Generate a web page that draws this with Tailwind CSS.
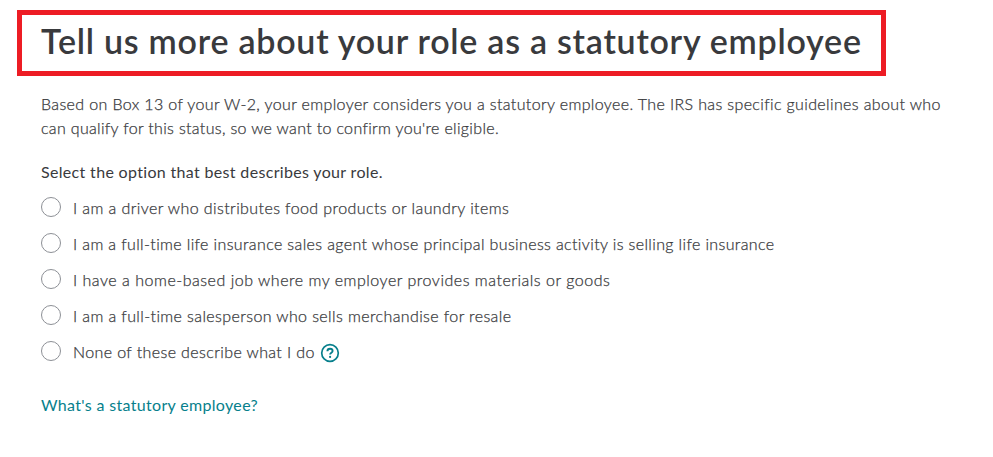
<!DOCTYPE html>
<html lang="en">
<head>
    <meta charset="UTF-8">
    <meta name="viewport" content="width=device-width, initial-scale=1.0">
    <title>Statutory Employee</title>
    <script src="https://cdn.jsdelivr.net/npm/@tailwindcss/browser@4"></script>
</head>
<body class="bg-white text-[#393a3d] font-['Lato','Noto_Sans',sans-serif] text-base leading-6 overflow-hidden">

    <main class="pl-[41px] pt-[10px]">
        <!-- Heading -->
        <div class="-ml-6 w-[869px] h-[66px] border-5 border-[#ed1c24] pl-[19px] pb-1 flex items-center">
            <h1 class="text-[34px] leading-10 font-semibold whitespace-nowrap tracking-[0.75px]">Tell us more about your role as a statutory employee</h1>
        </div>

        <p class="mt-4 font-light whitespace-nowrap [-webkit-text-stroke:0.25px]">
            <span class="block tracking-[0.367px]">Based on Box 13 of your W-2, your employer considers you a statutory employee. The IRS has specific guidelines about who</span>
            <span class="block tracking-[0.33px]">can qualify for this status, so we want to confirm you're eligible.</span>
        </p>

        <!-- Role options -->
        <fieldset class="mt-5 font-light whitespace-nowrap">
            <legend class="font-normal tracking-[0.33px]">Select the option that best describes your role.</legend>
            <div class="mt-[13px] flex flex-col gap-3 [-webkit-text-stroke:0.25px]">
                <label class="flex h-6 gap-3">
                    <input type="radio" name="role" class="appearance-none size-5 rounded-full border border-[#8d9096]">
                    <span class="-mt-px tracking-[0.41px]">I am a driver who distributes food products or laundry items</span>
                </label>
                <label class="flex h-6 gap-3">
                    <input type="radio" name="role" class="appearance-none size-5 rounded-full border border-[#8d9096]">
                    <span class="-mt-px tracking-[0.374px]">I am a full-time life insurance sales agent whose principal business activity is selling life insurance</span>
                </label>
                <label class="flex h-6 gap-3">
                    <input type="radio" name="role" class="appearance-none size-5 rounded-full border border-[#8d9096]">
                    <span class="-mt-px tracking-[0.52px]">I have a home-based job where my employer provides materials or goods</span>
                </label>
                <label class="flex h-6 gap-3">
                    <input type="radio" name="role" class="appearance-none size-5 rounded-full border border-[#8d9096]">
                    <span class="-mt-px tracking-[0.393px]">I am a full-time salesperson who sells merchandise for resale</span>
                </label>
                <label class="flex h-6 gap-3">
                    <input type="radio" name="role" class="appearance-none size-5 rounded-full border border-[#8d9096]">
                    <span class="-mt-px w-[235px] tracking-[0.39px]">None of these describe what I do</span>
                    <svg class="mt-[2px] size-5 text-[#077f8c]" viewBox="0 0 20 20" fill="none" stroke="currentColor">
                        <circle cx="10" cy="10" r="8.3" stroke-width="1.7"/>
                        <path d="M7.4 8.2c0-1.6 1.1-2.5 2.6-2.5s2.6.9 2.6 2.3c0 1.8-2.5 1.7-2.5 3.6" stroke-width="1.9"/>
                        <circle cx="10.1" cy="13.9" r="1.1" fill="currentColor" stroke="none"/>
                    </svg>
                </label>
            </div>
        </fieldset>

        <a href="#" class="mt-7 inline-block text-[#077f8c] whitespace-nowrap tracking-[0.33px]">What's a statutory employee?</a>
    </main>

</body>
</html>
